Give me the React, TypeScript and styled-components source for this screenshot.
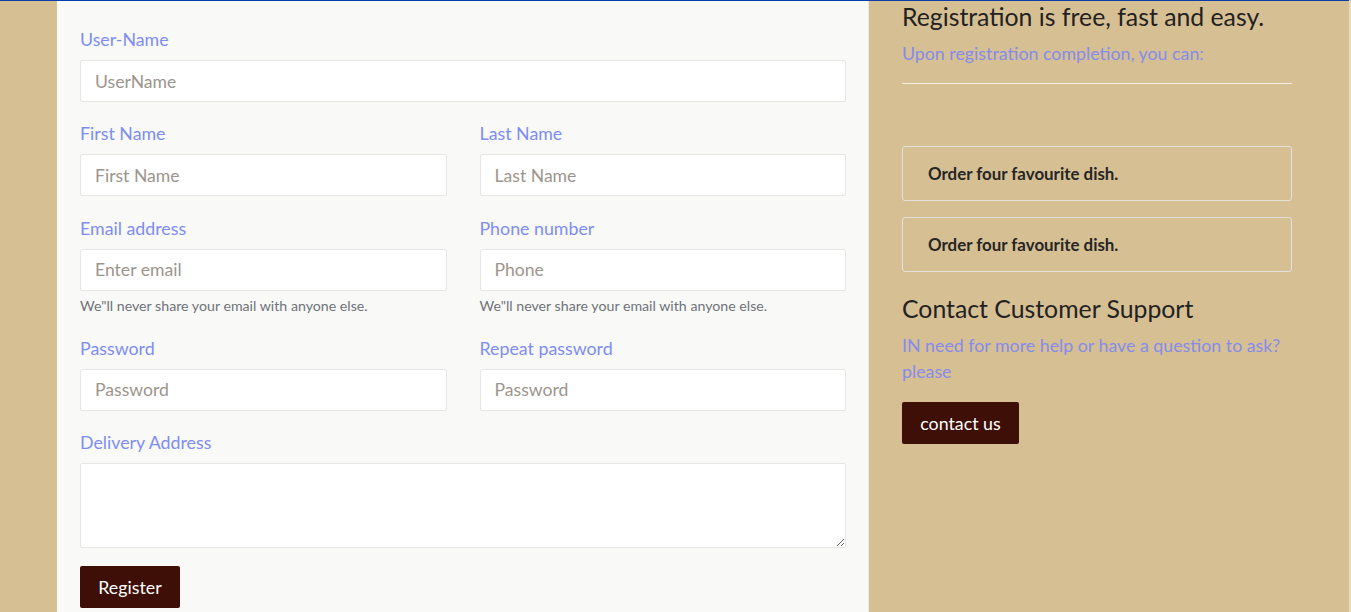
import React from "react";
import styled, { createGlobalStyle } from "styled-components";

const GlobalStyle = createGlobalStyle`
  html, body { margin: 0; padding: 0; }
  body {
    background: #d6bf93;
    font-family: "Segoe UI", Lato, "Noto Sans", sans-serif;
    overflow: hidden;
  }
  * { box-sizing: border-box; }
`;

const TopLine = styled.div`
  height: 1px;
  background: #0b3ea8;
  margin-right: 2px;
`;

const Page = styled.div`
  display: flex;
  align-items: flex-start;
  padding-left: 57px;
  min-height: 611px;
  border-right: 2px solid #e6dbc1;
`;

const FormPanel = styled.form`
  width: 812px;
  min-height: 611px;
  background: #f9f9f7;
  border-left: 1px solid #fbfbfa;
  border-right: 1px solid #e9e9e6;
  padding: 25px 22px 0 22px;
`;

const Row = styled.div`
  display: grid;
  grid-template-columns: 1fr 1fr;
  column-gap: 33px;
`;

const Group = styled.div`
  margin-bottom: 18.3px;
`;

const Label = styled.label`
  display: block;
  color: #7d8df3;
  font-size: 17.8px;
  line-height: 26px;
  margin-bottom: 8px;
`;

const Input = styled.input`
  display: block;
  width: 100%;
  height: 42px;
  background: #fff;
  border: 1px solid #e6e6e4;
  border-radius: 2px;
  padding: 0 14px;
  font-family: inherit;
  font-size: 17.6px;
  color: #333;
  outline: none;
  &::placeholder { color: #9b958d; }
`;

const TextArea = styled.textarea`
  display: block;
  width: 100%;
  height: 85px;
  background: #fff;
  border: 1px solid #e6e6e4;
  border-radius: 2px;
  padding: 8px 14px;
  font-family: inherit;
  font-size: 17.6px;
  outline: none;
`;

const Help = styled.small`
  display: block;
  margin-top: 4px;
  font-size: 14.2px;
  line-height: 22px;
  color: #6f737a;
`;

const DarkButton = styled.button<{ $w: number }>`
  display: inline-flex;
  align-items: center;
  justify-content: center;
  width: ${(p) => p.$w}px;
  height: 42px;
  background: #3d0f07;
  color: #fff;
  border: none;
  border-radius: 2px;
  font-family: inherit;
  font-size: 17.8px;
  cursor: pointer;
`;

const Aside = styled.aside`
  width: 390px;
  margin-left: 33px;
`;

const Heading = styled.h3`
  margin: 0;
  font-size: 24.8px;
  font-weight: 400;
  line-height: 32px;
  color: #222;
`;

const Lead = styled.p`
  margin: 7px 0 0;
  font-size: 17.8px;
  line-height: 26px;
  color: #858ceb;
`;

const Rule = styled.hr`
  border: none;
  border-top: 1px solid #f4efe3;
  margin: 17px 0 62px;
`;

const Feature = styled.div`
  height: 55px;
  border: 1px solid #e4e1dc;
  border-radius: 3px;
  display: flex;
  align-items: center;
  padding-left: 25px;
  font-size: 16.9px;
  font-weight: 700;
  color: #262626;
  margin-bottom: 16px;
`;

const SupportHeading = styled(Heading)`
  margin-top: 21px;
`;

const ButtonWrap = styled.div`
  margin-top: 18px;
`;

type Field = { label: string; placeholder: string; help?: string };

const FieldGroup = ({ label, placeholder, help }: Field) => (
  <Group>
    <Label>{label}</Label>
    <Input placeholder={placeholder} />
    {help && <Help>{help}</Help>}
  </Group>
);

export default function App() {
  const help = 'We"ll never share your email with anyone else.';
  return (
    <>
      <GlobalStyle />
      <TopLine />
      <Page>
        <FormPanel onSubmit={(e) => e.preventDefault()}>
          <FieldGroup label="User-Name" placeholder="UserName" />
          <Row>
            <FieldGroup label="First Name" placeholder="First Name" />
            <FieldGroup label="Last Name" placeholder="Last Name" />
          </Row>
          <Row>
            <FieldGroup label="Email address" placeholder="Enter email" help={help} />
            <FieldGroup label="Phone number" placeholder="Phone" help={help} />
          </Row>
          <Row>
            <FieldGroup label="Password" placeholder="Password" />
            <FieldGroup label="Repeat password" placeholder="Password" />
          </Row>
          <Group>
            <Label>Delivery Address</Label>
            <TextArea />
          </Group>
          <DarkButton $w={100} type="submit">Register</DarkButton>
        </FormPanel>
        <Aside>
          <Heading>Registration is free, fast and easy.</Heading>
          <Lead>Upon registration completion, you can:</Lead>
          <Rule />
          <Feature>Order four favourite dish.</Feature>
          <Feature>Order four favourite dish.</Feature>
          <SupportHeading>Contact Customer Support</SupportHeading>
          <Lead>IN need for more help or have a question to ask? please</Lead>
          <ButtonWrap>
            <DarkButton $w={117} type="button">contact us</DarkButton>
          </ButtonWrap>
        </Aside>
      </Page>
    </>
  );
}
